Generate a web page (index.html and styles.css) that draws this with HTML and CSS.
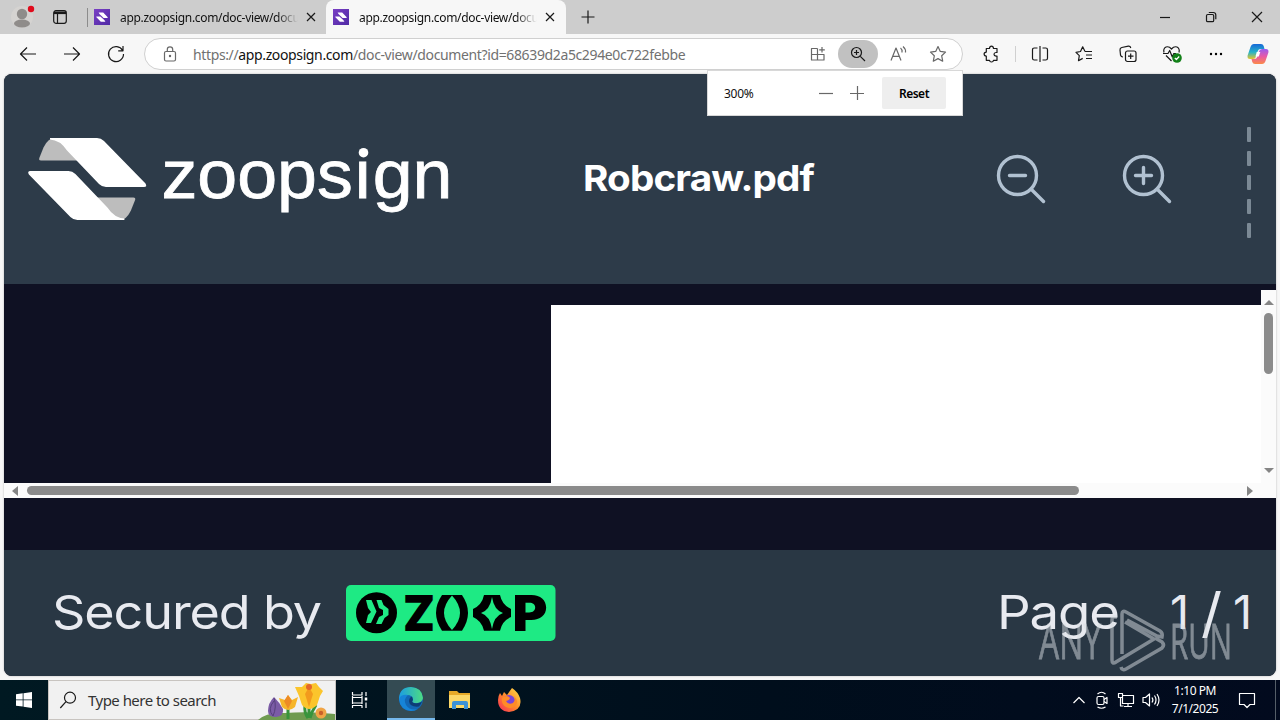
FILE: index.html
```html
<!DOCTYPE html>
<html lang="en">
<head>
  <meta charset="UTF-8">
  <title>app.zoopsign.com/doc-view/document</title>
  <link rel="stylesheet" href="styles.css">
</head>
<body>
  <!-- Shared symbols -->
  <svg width="0" height="0" class="defs">
    <defs>
      <linearGradient id="purple" x1="0" y1="0" x2="1" y2="1"><stop offset="0" stop-color="#7a3fc4"/><stop offset="1" stop-color="#4f2aa5"/></linearGradient>
      <linearGradient id="edgeTop" x1="0" y1="0" x2="1" y2="0"><stop offset="0" stop-color="#1b9de2"/><stop offset="1" stop-color="#4ddc82"/></linearGradient>
      <linearGradient id="fox" x1="1" y1="0" x2="0" y2="1"><stop offset="0" stop-color="#ffe04a"/><stop offset=".5" stop-color="#ff8a2a"/><stop offset="1" stop-color="#f5285c"/></linearGradient>
      <linearGradient id="copA" x1="0" y1="0" x2="0" y2="1"><stop offset="0" stop-color="#1668d8"/><stop offset=".55" stop-color="#27b4c8"/><stop offset="1" stop-color="#e6c52c"/></linearGradient>
      <linearGradient id="copB" x1="0" y1="0" x2="0" y2="1"><stop offset="0" stop-color="#9a5cf0"/><stop offset=".5" stop-color="#e85aa5"/><stop offset="1" stop-color="#fb8a48"/></linearGradient>
      <symbol id="favicon" viewBox="0 0 16 16">
        <rect width="16" height="16" fill="url(#purple)"/>
        <path d="M4.6 3.5h4.6l4.5 4.7q.3.7-.5.7H9.6L5.5 5.1zM11.4 12.8H6.8L2.2 8q-.2-.6.5-.6h3.7l4.1 3.8z" fill="#fff"/>
      </symbol>
      <symbol id="close" viewBox="0 0 10 10"><path d="M1 1l8 8M9 1l-8 8"/></symbol>
    </defs>
  </svg>

  <!-- Tab strip -->
  <div class="tabstrip">
    <div class="profile">
      <svg width="24" height="26" viewBox="0 0 24 26"><circle cx="12" cy="13" r="11" fill="#d5d3d1"/><circle cx="12" cy="10" r="5.2" fill="#8f8c8a"/><ellipse cx="12" cy="19.5" rx="8" ry="4" fill="#8f8c8a"/><circle cx="21" cy="5" r="3.2" fill="#e00b1c"/></svg>
    </div>
    <div class="workspaces">
      <svg class="line" width="16" height="16" viewBox="0 0 16 16"><rect x="1.7" y="1.7" width="12.6" height="12.6" rx="2.2"/><path d="M2 3.8h12" stroke-width="2.6"/><path d="M5.5 5v9"/></svg>
    </div>
    <div class="tab">
      <svg width="16" height="16"><use href="#favicon"/></svg>
      <span class="tab_title">app.zoopsign.com/doc-view/docu</span>
      <svg class="line tab_close" width="10" height="10"><use href="#close"/></svg>
    </div>
    <div class="tab active">
      <svg width="16" height="16"><use href="#favicon"/></svg>
      <span class="tab_title">app.zoopsign.com/doc-view/docu</span>
      <svg class="line tab_close" width="10" height="10"><use href="#close"/></svg>
    </div>
    <div class="new_tab"><svg class="line" width="14" height="14" viewBox="0 0 14 14"><path d="M7 .5v13M.5 7h13"/></svg></div>
    <div class="window_buttons">
      <div><svg class="line" width="12" height="12" viewBox="0 0 12 12"><path d="M1 6.5h10"/></svg></div>
      <div><svg class="line" width="12" height="12" viewBox="0 0 12 12"><rect x="1.5" y="3.5" width="7.2" height="7.2" rx="1.3"/><path d="M3.8 1.5h4.4q2.6 0 2.6 2.6v4.2"/></svg></div>
      <div><svg class="line" width="12" height="12" viewBox="0 0 12 12"><path d="M1 1l10 10M11 1L1 11"/></svg></div>
    </div>
  </div>

  <!-- Toolbar -->
  <div class="toolbar">
    <div class="tool"><svg class="line" width="18" height="18" viewBox="0 0 18 18"><path d="M17 9H1.5M8 2.5L1.5 9 8 15.5"/></svg></div>
    <div class="tool"><svg class="line" width="18" height="18" viewBox="0 0 18 18"><path d="M1 9h15.5M10 2.5L16.5 9 10 15.5"/></svg></div>
    <div class="tool"><svg class="line" width="18" height="18" viewBox="0 0 18 18"><path d="M15.6 5.5A7.5 7.5 0 1 0 16.5 9M16 1v4.8h-4.8"/></svg></div>
    <div class="address">
      <svg class="line grey lock" width="14" height="16" viewBox="0 0 14 16"><rect x="1.5" y="5.5" width="11" height="9.5" rx="1.5"/><path d="M4.3 5.5V3.5a2.7 2.7 0 0 1 5.4 0v2"/><circle cx="7" cy="10" r=".6"/></svg>
      <span class="url">https://<b>app.zoopsign.com</b>/doc-view/document?id=68639d2a5c294e0c722febbe</span>
      <div class="address_icons">
        <div><svg class="line grey" width="16" height="16" viewBox="0 0 16 16"><path d="M7.5 2.5h-6V14H14V8.5H1.5M7.5 2.5V14M12 1v5.5M9.2 3.8h5.6"/></svg></div>
        <div class="pill"><svg class="line" width="16" height="16" viewBox="0 0 16 16"><circle cx="6.5" cy="6.5" r="5"/><path d="M10.3 10.3L15 15M6.5 4v5M4 6.5h5"/></svg></div>
        <div><svg class="line grey" width="18" height="18" viewBox="0 0 18 18"><path d="M2 15.5L7 3l5 12.5M3.7 11.3h6.6M11.500 3q2 1.500 1.500 4.500M14 1.500q3 2.500 2.500 6"/></svg></div>
        <div><svg class="line grey" width="18" height="18" viewBox="0 0 18 18"><path d="M9 1.500l2.300 4.900 5.200.7-3.800 3.700 1 5.400L9 13.600l-4.700 2.600 1-5.400-3.800-3.700 5.200-.7z"/></svg></div>
      </div>
    </div>
    <div class="tool extensions"><svg class="line" width="18" height="18" viewBox="0 0 18 18"><path d="M7.500 3.500q.2-2.300 2-2.300t2 2.300H15v4h-1q-2 .1-2 1.800t2 1.800h1v4.200h-3.500q-.2 1.700-2 1.700t-2-1.700H4.300v-4.200q-2.200-.1-2.200-2t2.200-2V3.500z"/></svg></div>
    <div class="divider"></div>
    <div class="tool"><svg class="line" width="18" height="18" viewBox="0 0 18 18"><path d="M9 1v16M6.500 3H3.300Q1.500 3 1.500 4.800v8.400q0 1.800 1.800 1.800h3.200M11.500 3h3.200q1.800 0 1.800 1.800v8.400q0 1.800-1.800 1.800h-3.200"/></svg></div>
    <div class="tool"><svg class="line" width="18" height="18" viewBox="0 0 18 18"><path d="M10 6.500L7.700 1.800 5.500 6.500l-4.500.8 3.300 3.400-.8 5 4.200-2.300M10 6.500h7M11 10h6M11 13.500h6"/></svg></div>
    <div class="tool"><svg class="line" width="18" height="18" viewBox="0 0 18 18"><rect x="6.500" y="6" width="10.500" height="10.500" rx="2"/><path d="M11.700 8.500v5.500M9 11.200h5.500M4 12q-2 0-2.500-2L1 5Q.8 3 2.800 2.500l6.500-1.300q2-.2 2.500 1.800"/></svg></div>
    <div class="tool"><svg class="line" width="20" height="18" viewBox="0 0 20 18"><path d="M2 7.500Q1 3.500 4 2q3-1 5.500 2 2.500-3 5.500-2 3 1.500 2 5.500M4 10.500l5.500 5.500M1 8.500h5l1.700-3 2.600 6.500 1.500-3.500H14"/><circle cx="15" cy="13" r="4.8" fill="#128018" stroke="none"/><path d="M12.800 13l1.600 1.500 2.800-3" stroke="#fff"/></svg></div>
    <div class="tool"><svg width="16" height="4" viewBox="0 0 16 4"><circle cx="3" cy="2" r="1.2"/><circle cx="8" cy="2" r="1.2"/><circle cx="13" cy="2" r="1.2"/></svg></div>
    <div class="tool copilot"><svg width="22" height="22" viewBox="0 0 22 22"><path d="M7 1h7q2 0 2.700 2l.8 3h-4q-2 0-2.700 2L9 13.500q-.7 2.500-3 2.500H3Q0 16 .6 12.500L3.500 4Q4.500 1 7 1z" fill="url(#copA)"/><path d="M15 21H8q-2 0-2.700-2l-.8-3h3q2 0 2.700-2L12 8.500Q12.700 6 15 6h4q3 0 2.400 3.500L18.500 18q-1 3-3.500 3z" fill="url(#copB)"/><path d="M9.700 9h3.600l-1.500 4.500H8.500z" fill="#fff"/></svg></div>
  </div>

  <div class="zoom_popup">
    <span class="percent">300%</span>
    <svg class="line grey" width="16" height="16" viewBox="0 0 16 16"><path d="M1 8.500h14"/></svg>
    <svg class="line grey" width="16" height="16" viewBox="0 0 16 16"><path d="M0 8.500h14M7.500 1v14"/></svg>
    <button>Reset</button>
  </div>

  <!-- Page -->
  <div class="page">
    <header>
      <svg class="logo" width="426" height="96" viewBox="28 131 426 96">
        <g id="ribbon">
          <path d="M41 160.500q-2.500 0-1.700-2.500l4.200-10.500q4.500-9.500 11-9.500h6l18 22.500z" fill="#bdbdbd"/>
          <path d="M50 138h47q4 0 7 3l41.500 42.500q2 3.500-1.500 3.500h-38q-4 0-7-3L67 150.500q-7-10.500-17-11z" fill="#fff"/>
        </g>
        <use href="#ribbon" transform="rotate(180 87.2 179)"/>
        <!-- dotless i, the dot is the round one below -->
        <text class="wordmark" x="161.500" y="197.500" textLength="291" lengthAdjust="spacingAndGlyphs">zoopsıgn</text>
        <circle cx="363.500" cy="152.700" r="4.800" fill="#fff"/>
      </svg>
      <svg class="file_name" width="236" height="50"><text x="0" y="37" textLength="231" lengthAdjust="spacingAndGlyphs">Robcraw.pdf</text></svg>
      <div class="zoom_tools">
        <svg width="52" height="52" viewBox="0 0 52 52"><circle cx="22.500" cy="22.500" r="19"/><path d="M36 36l12.500 12.500M14.500 22.500h16"/></svg>
        <svg width="52" height="52" viewBox="0 0 52 52"><circle cx="22.500" cy="22.500" r="19"/><path d="M36 36l12.500 12.500M14.500 22.500h16M22.500 14.500v16"/></svg>
      </div>
      <div class="dashes"><i></i><i></i><i></i><i></i><i></i></div>
    </header>

    <main>
      <div class="viewer">
        <div class="canvas"><div class="sheet"></div></div>
        <div class="vbar"><i class="up"></i><b></b><i class="down"></i></div>
        <div class="hbar"><i class="left"></i><b></b><i class="right"></i></div>
      </div>
    </main>

    <footer>
      <svg width="274" height="80"><text x="-1" y="56" textLength="269" lengthAdjust="spacingAndGlyphs">Secured by</text></svg>
      <svg class="badge" width="210" height="56" viewBox="346 585 210 56">
        <rect x="346" y="585" width="209.500" height="56" rx="5" fill="#1eea84"/>
        <circle cx="376.500" cy="612.700" r="20.500"/>
        <path d="M366 600h5.500l5 11.500-5.500 11.500h-5l2-8 3-3-3-4zM376.500 600h5l2 5 5 4v6l-4 3-3 6h-5.500l3-7 4-2v-5l-4-2z" fill="#1eea84"/>
        <text x="403" y="630.700" textLength="32" lengthAdjust="spacingAndGlyphs">Z</text>
        <text class="inner" x="442" y="623" textLength="20" lengthAdjust="spacingAndGlyphs">O</text>
        <text class="inner" x="482" y="623" textLength="20" lengthAdjust="spacingAndGlyphs">O</text>
        <text x="512.500" y="630.700" textLength="35" lengthAdjust="spacingAndGlyphs">P</text>
        <path d="M442 595h20q12 17.800 0 35.700h-20q-12-17.900 0-35.700z"/>
        <path d="M452 595.500q16 17.500 0 34.500-16-17 0-34.500z" fill="#1eea84"/>
        <path d="M484 595h16q2 10 11 14v8q-9 4-11 13.700h-16q-2-9.700-11-13.700v-8q9-4 11-14z"/>
        <path d="M492 597q2 13 11 16-9 3-11 16-2-13-11-16 9-3 11-16z" fill="#1eea84"/>
      </svg>
      <svg class="page_count" width="254" height="80">
        <text x="-2" y="56" textLength="122" lengthAdjust="spacingAndGlyphs">Page</text>
        <text x="171" y="56">1</text>
        <text class="slash" x="202" y="59" textLength="20" lengthAdjust="spacingAndGlyphs">/</text>
        <text x="234" y="56">1</text>
      </svg>
    </footer>
  </div>

  <!-- Watermark over the page -->
  <svg class="watermark" width="196" height="64" viewBox="1037 609 196 64">
    <text x="1039" y="659" textLength="62" lengthAdjust="spacingAndGlyphs">ANY</text>
    <path d="M1122 654V614q0-4 4-2l34 19q3 2 2 6l-5-1-30-16M1117 617h-3q-2 0-2 3v40q0 5 4 2l38-23-29-17M1121 667q1 4 5 2l36-21q3-3 0-6l-7-4"/>
    <text x="1170" y="659" textLength="62" lengthAdjust="spacingAndGlyphs">RUN</text>
  </svg>

  <!-- Taskbar -->
  <div class="taskbar">
    <div class="start"><svg width="16" height="16" viewBox="0 0 16 16" fill="#fff"><path d="M0 2.200l6.700-.9v6.200H0zM7.500 1.200L16 0v7.500H7.500zM0 8.300h6.700v6.300L0 13.700zM7.500 8.300H16V16l-8.500-1.200z"/></svg></div>
    <div class="search">
      <svg class="line" width="18" height="18" viewBox="0 0 18 18"><circle cx="11" cy="6.700" r="5.500"/><path d="M7 10.700L1.300 17"/></svg>
      <span>Type here to search</span>
      <svg class="flowers" width="80" height="39" viewBox="-4 0 80 39">
        <path d="M-1 39q8-8 27-7 24-2 50 1v6z" fill="#6f9b50"/>
        <path d="M29 25v13M50 18v19M46 24q-1 8 3 13M57 24q-4 6-6 13" stroke="#38943c" stroke-width="3" fill="none"/>
        <path d="M15 16q-6 6-6 14 0 6 8 6 8-1 7-8-3-6-9-12z" fill="#7b5ba6"/><path d="M15 17q3 9-1 18M15 20q-7 8-1 15" stroke="#56417c" fill="none"/>
        <path d="M20 17l6 2 3-5 4 5 6-3-3 10q-7 6-13 0z" fill="#f6b529"/><path d="M29 14l4 6-4 8-4-8z" fill="#ed8b25"/>
        <path d="M36 6l7 0 4-4 5 1 5-1 3 4 4 4-3 5-3 9q-8 8-15 0l-3-9z" fill="#fbc52c"/><path d="M50 6l4 7-4 13-4-13z" fill="#f29b1d"/><circle cx="50" cy="6" r="3" fill="#e4662a"/>
        <circle cx="62" cy="32" r="5.500" fill="#f1a545"/><circle cx="62" cy="32" r="2.200" fill="#c9612a"/>
      </svg>
    </div>
    <div class="task"><svg class="line white" width="18" height="18" viewBox="0 0 18 18"><path d="M1.500 1v3h9.500V1M1.500 17v-2.500h9.500V17M1.500 5v8M11 5v8M1.500 6.500h9.500M1.500 12h9.500M15 1v4M15 11.500V17"/><path d="M15 6.500v3" stroke-width="2.500"/></svg></div>
    <div class="task active"><svg width="24" height="24" viewBox="0 0 24 24"><circle cx="12" cy="12" r="12" fill="#1267b5"/><path d="M0 11Q1 0 12 0q11 .5 12 11-1 6-9 5-3-1-1-3 0-5-6-5-6 0-8 6z" fill="url(#edgeTop)"/><path d="M9 8q-5 4-2 10 4 6 12 4-3 2-7 2Q1 23 0 12q2-5 9-4z" fill="#1684d8"/><path d="M14 13q-2 2 1 3 5 1 8-1.500-1 3-3 5-9 1-10-5 0-4 3-5z" fill="#0d3d76"/></svg></div>
    <div class="task"><svg width="22" height="20" viewBox="0 0 22 20"><path d="M0 1h8l2 2h11v15H0z" fill="#e6a928"/><path d="M0 5h21v13H0z" fill="#fbd768"/><path d="M3 19v-6q0-2 2-2h12q2 0 2 2v6h-4v-4H7v4z" fill="#3c91d6"/></svg></div>
    <div class="task"><svg width="24" height="24" viewBox="0 0 24 24"><path d="M3 5l2 3 2-4 3 3 5-7q6 4 8 10 3 12-11 14Q1 23 1 12q0-4 2-7z" fill="url(#fox)"/><circle cx="12" cy="13" r="6" fill="#7a45d8"/><path d="M5 10q5-4 8 0 0 2-4 3 2 4 7 2 3-3 1-7 5 5 2 9-4 5-10 2-5-3-4-9z" fill="#ff8b27"/></svg></div>
    <div class="tray">
      <svg class="line white" width="14" height="14" viewBox="0 0 14 14"><path d="M1.500 10L7 4.500l5.500 5.500"/></svg>
      <svg class="line white" width="14" height="18" viewBox="0 0 14 18"><rect x="3" y="5.500" width="7" height="8" rx="1.500"/><path d="M10 8.500l3-2v6l-3-2M3.500 3q4-3.500 8 0M3.500 16q4 2.500 8 0"/></svg>
      <svg class="line white" width="18" height="16" viewBox="0 0 18 16"><path d="M6.500 3.500h11v8h-11zM12 11.500V15M8 14.500h8M2.500 1.500h4v4h-4zM4.500 5.500v8.500h3"/></svg>
      <svg class="line white" width="18" height="16" viewBox="0 0 18 16"><path d="M1 5.500h2.500L7.500 2v12l-4-3.500H1zM10 5.500q1.800 2.500 0 5M12.500 3.500q3 4.500 0 9M15 2q4 6 0 12"/></svg>
    </div>
    <div class="clock"><span>1:10 PM</span><span class="date">7/1/2025</span></div>
    <div class="notifications"><svg class="line white" width="18" height="18" viewBox="0 0 18 18"><path d="M1.500 2.500h15v11H12L9 16.500l-3-3H1.500z"/></svg></div>
    <div class="show_desktop"></div>
  </div>
</body>
</html>
```
FILE: styles.css
```css
* {
  box-sizing: border-box;
}
body {
  margin: 0;
  width: 1280px;
  height: 720px;
  overflow: hidden;
  background-color: #f7f7f7;
  font-family: "Noto Sans", sans-serif;
  font-size: 12px;
  color: #111;
  position: relative;
}
svg {
  display: block;
  flex-shrink: 0;
  overflow: visible;
}
.defs {
  position: absolute;
}
.line {
  fill: none;
  stroke: #191919;
  stroke-width: 1.2;
  stroke-linejoin: round;
}
.line.grey {
  stroke: #686868;
}
.line.white {
  stroke: #fff;
}

/* Tab strip */
.tabstrip {
  display: flex;
  height: 34px;
  background-color: #cdcdcd;
}
.profile,
.workspaces,
.new_tab,
.window_buttons div,
.tool,
.address_icons div,
.start,
.task,
.notifications {
  display: flex;
  align-items: center;
  justify-content: center;
}
.profile {
  width: 44px;
}
.workspaces {
  width: 32px;
}
.tab {
  display: flex;
  align-items: center;
  width: 239px;
  padding-left: 7px;
}
.tab:not(.active) {
  margin-left: 11px;
  position: relative;
}
.tab:not(.active)::before {
  content: "";
  position: absolute;
  left: 0;
  top: 8px;
  width: 1px;
  height: 19px;
  background-color: #8c8c8c;
}
.tab.active {
  width: 240px;
  background-color: #f7f7f7;
  border-radius: 8px 8px 0 0;
}
.tab_title {
  width: 178px;
  margin-left: 10px;
  overflow: hidden;
  white-space: nowrap;
  letter-spacing: -0.33px;
  -webkit-mask-image: linear-gradient(to right, #000 88%, transparent);
  mask-image: linear-gradient(to right, #000 88%, transparent);
}
.tab_close {
  margin-left: 8px;
}
.new_tab {
  width: 43px;
}
.window_buttons {
  display: flex;
  margin-left: auto;
}
.window_buttons div {
  width: 46px;
}

/* Toolbar */
.toolbar {
  display: flex;
  align-items: center;
  height: 40px;
  padding-left: 6px;
}
.tool {
  width: 44px;
  height: 40px;
}
.address {
  display: flex;
  align-items: center;
  width: 819px;
  height: 32px;
  margin-left: 6px;
  padding-left: 18px;
  background-color: #fff;
  border: 1px solid #d0d0d0;
  border-radius: 16px;
}
.url {
  margin-left: 16px;
  font-size: 14px;
  letter-spacing: -0.37px;
  color: #717171;
  white-space: nowrap;
}
.url b {
  font-weight: 400;
  color: #111;
}
.address_icons {
  display: flex;
  margin-left: auto;
  margin-right: 4px;
}
.address_icons div {
  width: 40px;
  height: 28px;
}
.address_icons .pill {
  background-color: #c1c1c1;
  border-radius: 14px;
}
.extensions {
  margin-left: 6px;
}
.divider {
  width: 1px;
  height: 16px;
  margin: 0 2px;
  background-color: #d0d0d0;
}
.copilot {
  width: 40px;
}

/* Zoom popup */
.zoom_popup {
  position: absolute;
  z-index: 2;
  left: 707px;
  top: 70px;
  width: 256px;
  height: 46px;
  display: flex;
  align-items: center;
  gap: 16px;
  padding-left: 16px;
  background-color: #fff;
  border: 1px solid #d8d8d8;
}
.percent {
  width: 78px;
  letter-spacing: -0.3px;
}
.zoom_popup button {
  width: 64px;
  height: 32px;
  padding: 0;
  border: 0;
  border-radius: 2px;
  background-color: #eee;
  font: 600 12px "Noto Sans", sans-serif;
  letter-spacing: -0.5px;
}

/* Page */
.page {
  width: 1272px;
  height: 602px;
  margin: 0 4px;
  border-radius: 8px;
  overflow: hidden;
  background-color: #0f1123;
  box-shadow: 0 0 2px rgba(0, 0, 0, 0.3);
}
header {
  display: flex;
  align-items: center;
  height: 210px;
  padding-left: 24px;
  background-color: #2d3b49;
}
.wordmark {
  font-family: "Liberation Sans", sans-serif;
  font-size: 69px;
  fill: #fff;
  stroke: #fff;
  stroke-width: 0.8;
}
.file_name {
  margin-left: 129px;
  fill: #fff;
  font-family: Inter, sans-serif;
  font-weight: 700;
  font-size: 36px;
  letter-spacing: -0.8px;
}
.zoom_tools {
  display: flex;
  gap: 74px;
  margin-left: 176px;
}
.zoom_tools svg {
  fill: none;
  stroke: #b1c1d1;
  stroke-width: 3.4;
  stroke-linecap: round;
}
.dashes {
  display: flex;
  flex-direction: column;
  gap: 9px;
  margin-left: 74px;
  margin-top: 7px;
}
.dashes i {
  width: 4px;
  height: 15px;
  border-radius: 1px;
  background-color: #7b8995;
}
main {
  height: 266px;
  padding-top: 6px;
}
.viewer {
  display: grid;
  grid-template-columns: 1257px 15px;
  grid-template-rows: 193px 15px;
  background-color: #fbfbfb;
}
.canvas {
  padding: 15px 0 0 547px;
  background-color: #0f1123;
}
.sheet {
  height: 178px;
  background-color: #fff;
}
.vbar {
  display: flex;
  flex-direction: column;
  align-items: center;
  padding: 10px 0;
}
.vbar b {
  width: 9px;
  height: 61px;
  margin-top: 8px;
  border-radius: 5px;
  background-color: #8b8b8b;
}
.hbar {
  display: flex;
  align-items: center;
  padding: 0 8px;
}
.hbar b {
  width: 1052px;
  height: 9px;
  margin-left: 9px;
  border-radius: 5px;
  background-color: #8b8b8b;
}
.viewer i {
  border: 5px solid transparent;
}
.viewer .up {
  border-top: 0;
  border-bottom-color: #858585;
}
.viewer .down {
  margin-top: auto;
  border-bottom: 0;
  border-top-color: #858585;
}
.viewer .left {
  border-left: 0;
  border-right-color: #858585;
  border-right-width: 6px;
}
.viewer .right {
  margin-left: auto;
  border-right: 0;
  border-left-color: #858585;
  border-left-width: 6px;
}
footer {
  display: flex;
  align-items: center;
  height: 126px;
  padding-left: 49px;
  background-color: #293744;
  font-family: Inter, sans-serif;
  font-size: 47px;
  fill: #e8eaf0;
}
footer text {
  letter-spacing: -1px;
}
.badge {
  margin-left: 19px;
  fill: #000;
  font-weight: 900;
  font-size: 49px;
}
.badge text {
  letter-spacing: 0;
}
.badge .inner {
  font-size: 28px;
}
.page_count {
  margin-left: auto;
  margin-right: 23px;
}
.page_count .slash {
  font-size: 54px;
}
.watermark {
  position: absolute;
  left: 1037px;
  top: 609px;
  opacity: 0.5;
  font-family: "Open Sans", sans-serif;
  font-weight: 400;
  font-size: 50px;
  fill: #d8dde2;
  stroke: #d8dde2;
  stroke-width: 0.8;
}
.watermark path {
  fill: none;
  stroke-width: 3.5;
}

/* Taskbar */
.taskbar {
  display: flex;
  height: 40px;
  margin-top: 4px;
  background: linear-gradient(to right, #001922, #000e1c 60%, #020a1e);
}
.start {
  width: 48px;
}
.search {
  display: flex;
  align-items: center;
  width: 288px;
  padding-left: 10px;
  background-color: #f1f1f1;
  border: 1px solid #c8c4c0;
  font-size: 15px;
  letter-spacing: -0.53px;
  color: #333;
}
.search span {
  margin-left: 11px;
  white-space: nowrap;
}
.flowers {
  margin-left: auto;
}
.task {
  width: 48px;
}
.task.active {
  margin-left: 3px;
  background-color: #344b53;
  border-bottom: 2px solid #76b9ed;
}
.task.active + .task {
  width: 50px;
}
.tray {
  display: flex;
  align-items: center;
  gap: 8px;
  margin-left: auto;
}
.clock {
  display: flex;
  flex-direction: column;
  align-items: center;
  justify-content: center;
  width: 70px;
  line-height: 18px;
  letter-spacing: -0.45px;
  color: #fff;
}
.notifications {
  width: 34px;
}
.show_desktop {
  width: 5px;
  margin-left: 11px;
  border-left: 1px solid #555e68;
}
```
